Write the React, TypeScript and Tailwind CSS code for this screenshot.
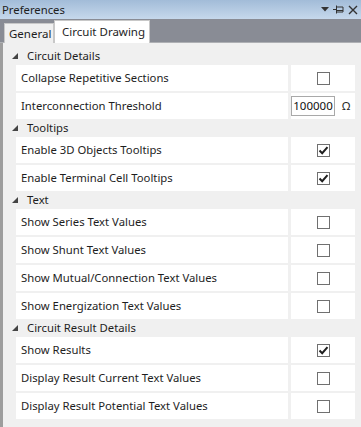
import React from "react";

const font = { fontFamily: '"Noto Sans", "Open Sans", sans-serif' };

function Check({ checked }: { checked: boolean }) {
  return (
    <div className="w-[13px] h-[13px] border border-[#707070] bg-white flex items-center justify-center">
      {checked && (
        <svg width="11" height="11" viewBox="0 0 11 11">
          <path d="M1.5 5.5 L4.2 8.2 L9.5 2.2" stroke="#1f1f1f" strokeWidth="2" fill="none" />
        </svg>
      )}
    </div>
  );
}

function Header({ label }: { label: string }) {
  return (
    <div className="h-[18px] flex items-center text-[11.3px] text-[#1e1e1e] pl-[9px] gap-[9px]">
      <svg width="6" height="6" viewBox="0 0 6 6">
        <path d="M6 0 L6 6 L0 6 Z" fill="#444" />
      </svg>
      <span className="leading-none">{label}</span>
    </div>
  );
}

function Row({ label, children }: { label: string; children: React.ReactNode }) {
  return (
    <div className="h-[26px] flex gap-[3px] pl-[13px]">
      <div className="w-[272px] bg-white flex items-center pl-[5px] text-[11.3px] text-[#1e1e1e] whitespace-nowrap overflow-hidden">
        {label}
      </div>
      <div className="w-[64px] bg-white flex items-center justify-center">{children}</div>
    </div>
  );
}

function Section({ title, rows }: { title: string; rows: { label: string; node: React.ReactNode }[] }) {
  return (
    <div className="flex flex-col">
      <Header label={title} />
      <div className="flex flex-col gap-[2px]">
        {rows.map((r) => (
          <Row key={r.label} label={r.label}>
            {r.node}
          </Row>
        ))}
      </div>
    </div>
  );
}

export default function App() {
  return (
    <div className="w-[361px] h-[427px] overflow-hidden flex flex-col bg-[#f0f0f0]" style={font}>
      <div className="h-[19px] bg-gradient-to-b from-[#a2bcd8] to-[#c6d8ec] flex items-center justify-between pl-[2px] pr-[3px]">
        <span className="text-[11.3px] text-[#1e1e1e] leading-none">Preferences</span>
        <div className="flex items-center gap-[4px]">
          <svg width="8" height="5" viewBox="0 0 8 5">
            <path d="M0 0 L8 0 L4 4.5 Z" fill="#333" />
          </svg>
          <svg width="11" height="9" viewBox="0 0 11 9">
            <path d="M0 4.5 H3 M3.5 0.5 V8.5 M3.5 2 H10 V7 H3.5 M3.5 5.5 H10" stroke="#333" strokeWidth="1" fill="none" />
          </svg>
          <svg width="10" height="10" viewBox="0 0 10 10">
            <path d="M1 1 L9 9 M9 1 L1 9" stroke="#333" strokeWidth="1.4" fill="none" />
          </svg>
        </div>
      </div>
      <div className="h-[24px] bg-[#898c95] flex items-end pl-[4px] border-b border-[#aeb0b4]">
        <div className="h-[20px] w-[50px] mb-[-1px] bg-[#f0f0f0] border border-[#c8c8c8] border-b-0 flex items-center pl-[4px] text-[11.5px] text-[#1e1e1e] whitespace-nowrap overflow-hidden">
          General
        </div>
        <div className="h-[23px] w-[96px] mb-[-1px] bg-white border border-[#c8c8c8] border-b-0 flex items-center pl-[7px] text-[11.5px] text-[#1e1e1e] relative z-10 whitespace-nowrap">
          Circuit Drawing
        </div>
      </div>
      <div className="flex-1 border-l-[3px] border-[#9d9d9d] pt-[4px] flex flex-col">
        <Section
          title="Circuit Details"
          rows={[
            { label: "Collapse Repetitive Sections", node: <Check checked={false} /> },
            {
              label: "Interconnection Threshold",
              node: (
                <div className="flex items-center w-full h-full">
                  <div className="h-[20px] w-[44px] border border-[#a9a9a9] bg-white flex items-center justify-center text-[11.5px] text-[#111]">
                    100000
                  </div>
                  <span className="ml-[7px] text-[11.5px] text-[#1e1e1e]">Ω</span>
                </div>
              ),
            },
          ]}
        />
        <Section
          title="Tooltips"
          rows={[
            { label: "Enable 3D Objects Tooltips", node: <Check checked /> },
            { label: "Enable Terminal Cell Tooltips", node: <Check checked /> },
          ]}
        />
        <Section
          title="Text"
          rows={[
            { label: "Show Series Text Values", node: <Check checked={false} /> },
            { label: "Show Shunt Text Values", node: <Check checked={false} /> },
            { label: "Show Mutual/Connection Text Values", node: <Check checked={false} /> },
            { label: "Show Energization Text Values", node: <Check checked={false} /> },
          ]}
        />
        <Section
          title="Circuit Result Details"
          rows={[
            { label: "Show Results", node: <Check checked /> },
            { label: "Display Result Current Text Values", node: <Check checked={false} /> },
            { label: "Display Result Potential Text Values", node: <Check checked={false} /> },
          ]}
        />
      </div>
    </div>
  );
}
